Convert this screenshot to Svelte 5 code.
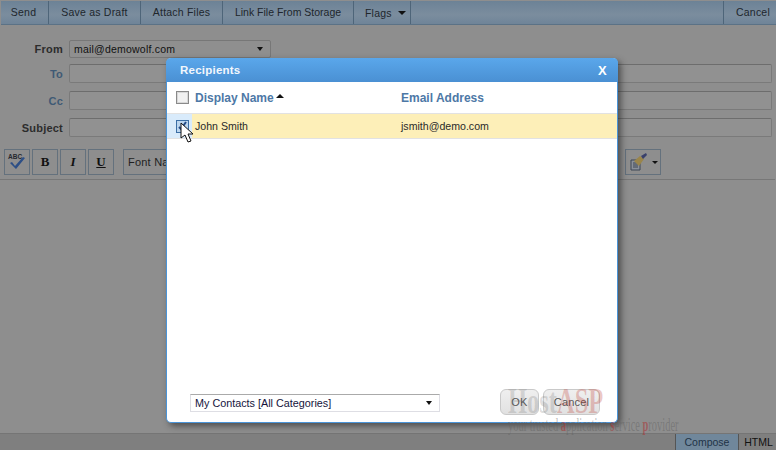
<script>
  const tabs = ['Send', 'Save as Draft', 'Attach Files', 'Link File From Storage'];
  const fields = ['To', 'Cc', 'Subject'];
</script>

<div class="page">
  <nav class="toolbar">
    {#each tabs as t}<span class="tool">{t}</span>{/each}
    <span class="tool flags">Flags <i class="caret"></i></span>
    <span class="grow"></span>
    <span class="tool cancel">Cancel</span>
  </nav>

  <section class="form">
    <div class="row from-row">
      <span class="lab">From</span>
      <span class="from">mail@demowolf.com<i class="caret small"></i></span>
    </div>
    {#each fields as f}
      <div class="row">
        <span class="lab" class:blue={f !== 'Subject'}>{f}</span>
        <span class="input"></span>
      </div>
    {/each}
  </section>

  <div class="editbar">
    <span class="btn">
      <svg width="20" height="20" viewBox="0 0 20 20">
        <text x="1" y="7" font-size="6.5" font-weight="700" font-family="Liberation Sans" fill="#26282e">ABC</text>
        <path d="M3 11l2-1 3 4 8-9 2 1-9 11z" fill="#2d4f86"/>
      </svg>
    </span>
    <span class="btn serif"><b>B</b></span>
    <span class="btn serif"><b><em>I</em></b></span>
    <span class="btn serif"><b><u>U</u></b></span>
    <span class="font">Font Name</span>
    <span class="grow"></span>
    <span class="btn paint">
      <svg width="20" height="20" viewBox="0 0 20 20">
        <path d="M2 8h9v10H2z" fill="#8a9099" stroke="#3d4654"/>
        <path d="M4 11h5M4 13h5M4 15h5" stroke="#3d4654"/>
        <path d="M5 9l6-5 4 3-5 7z" fill="#9a854a"/>
        <path d="M12 4l5-3 1 2-4 4z" fill="#39406b"/>
      </svg>
      <i class="caret tiny"></i>
    </span>
  </div>

  <main class="editor"></main>

  <footer class="status">
    <span class="mode active">Compose</span>
    <span class="mode html">HTML</span>
  </footer>

  <div class="mark" aria-hidden="true">
    <div class="mark-top">Host<span>ASP</span></div>
    <div class="mark-sub">your trusted <span>a</span>pplication <span>s</span>ervice <span>p</span>rovider</div>
  </div>

  <div class="dialog">
    <header class="dlg-head"><span>Recipients</span><span class="x">X</span></header>
    <div class="thead">
      <span class="cell-check"><i class="check"></i></span>
      <span class="name-col">Display Name<i class="up"></i></span>
      <span>Email Address</span>
    </div>
    <div class="tr">
      <span class="cell-check sel"><i class="check on">
        <svg width="11" height="11" viewBox="0 0 11 11"><path d="M2 6l2 2 5-7" fill="none" stroke="#234a86" stroke-width="2"/></svg>
      </i></span>
      <span class="name-col">John Smith</span>
      <span>jsmith@demo.com</span>
    </div>
    <div class="spacer"></div>
    <div class="dlg-foot">
      <span class="select">My Contacts [All Categories]<i class="caret small"></i></span>
      <span class="grow"></span>
      <span class="pill ok">OK</span>
      <span class="pill">Cancel</span>
    </div>
  </div>

  <svg class="cursor" width="14" height="21" viewBox="0 0 14 21">
    <path d="M1 1v15l4-3 3 7 3-1-3-7h5z" fill="#fff" stroke="#111" stroke-width="1"/>
  </svg>
</div>

<style>
  :global(body) { margin: 0; }
  .page {
    position: relative;
    width: 776px;
    height: 450px;
    overflow: hidden;
    display: flex;
    flex-direction: column;
    background: #8e8e8e;
    font-family: "Liberation Sans", Arial, sans-serif;
    font-size: 11px;
    color: #1f1f1f;
  }
  .grow { flex: 1; }
  .toolbar {
    height: 23px;
    margin: 1px 0 0 1px;
    display: flex;
    align-items: center;
    background: linear-gradient(#6c8296, #7b8d9e 60%, #6f8498);
    border-bottom: 1px solid #5b7286;
    flex: none;
  }
  .tool {
    box-sizing: border-box;
    height: 23px;
    line-height: 22px;
    text-align: center;
    border-right: 1px solid #4e6579;
    font-size: 10.5px;
    letter-spacing: 0.02em;
    color: #20262c;
    white-space: nowrap;
  }
  .tool:nth-child(1) { width: 48px; padding-right: 2px; }
  .tool:nth-child(2) { width: 92px; }
  .tool:nth-child(3) { width: 82px; }
  .tool:nth-child(4) { width: 131px; letter-spacing: 0; }
  .tool.flags { width: 57px; padding-left: 11px; display: flex; align-items: center; gap: 6px; }
  .tool.cancel { width: 53px; border-right: 0; border-left: 1px solid #4e6579; padding-left: 6px; }
  .caret {
    display: inline-block;
    width: 0; height: 0;
    border: 4px solid transparent;
    border-top: 4px solid #111;
    border-bottom: 0;
  }
  .form { flex: none; padding-top: 15px; }
  .row {
    height: 27px;
    display: flex;
    align-items: center;
    padding-right: 4px;
  }
  .from-row { height: 18px; margin-bottom: 2px; }
  .lab {
    width: 63px;
    margin-right: 6px;
    text-align: right;
    font-weight: 700;
    font-size: 11px;
    color: #2c2c2c;
    letter-spacing: 0.02em;
  }
  .lab.blue { color: #3f5a75; }
  .from {
    width: 189px;
    height: 16px;
    line-height: 16px;
    padding-left: 4px;
    border: 1px solid #777;
    border-radius: 2px;
    background: #8f8f8f;
    color: #111;
    font-size: 10.5px;
    letter-spacing: 0.02em;
    display: flex;
    justify-content: space-between;
    align-items: center;
    padding-right: 7px;
    box-sizing: content-box;
  }
  .input {
    flex: 1;
    height: 17px;
    border: 1px solid #7a7a7a;
    border-top-color: #6d6d6d;
    background: #919191;
    border-radius: 2px;
  }
  .editbar {
    flex: none;
    height: 26px;
    margin-top: 8px;
    padding: 0 115px 0 4px;
    display: flex;
    align-items: center;
    gap: 2px;
  }
  .btn {
    width: 24px;
    height: 24px;
    border: 1px solid #64717d;
    display: flex;
    align-items: center;
    justify-content: center;
    box-sizing: content-box;
  }
  .serif { font-family: "Liberation Serif", serif; font-size: 13px; color: #111; }
  .font {
    margin-left: 7px;
    height: 24px;
    width: 60px;
    line-height: 25px;
    padding-left: 4px;
    border: 1px solid #64717d;
    font-size: 11px;
    letter-spacing: 0.02em;
  }
  .paint { width: 34px; gap: 3px; }
  .caret.small { border-width: 4px 3.5px 0; }
  .caret.tiny { border-width: 3px 3px 0; }
  .editor {
    flex: 1;
    margin: 4px 1px 0 0;
    border-top: 1px solid #777;
  }
  .status {
    flex: none;
    height: 16px;
    display: flex;
    justify-content: flex-end;
    background: #7f7f7f;
    border-top: 1px solid #757575;
  }
  .mode { font-size: 10.5px; border-left: 1px solid #555; color: #111; line-height: 16px; box-sizing: border-box; text-align: center; }
  .mode.active { width: 63px; background: #70879b; color: #1f3347; }
  .mode.html { width: 38px; padding-left: 2px; }

  .mark {
    position: absolute;
    left: 508px;
    top: 385px;
    width: 180px;
    font-family: "Liberation Serif", serif;
    pointer-events: none;
    z-index: 3;
    white-space: nowrap;
  }
  .mark-top {
    font-size: 36px;
    font-weight: 700;
    line-height: 33px;
    color: rgba(110, 110, 110, 0.24);
    transform: scaleX(0.68);
    transform-origin: left;
  }
  .mark-top span { color: rgba(190, 60, 50, 0.28); }
  .mark-sub {
    font-size: 18px;
    line-height: 15px;
    transform: scaleX(0.58);
    transform-origin: left;
    color: rgba(95, 95, 95, 0.45);
  }
  .mark-sub span { color: rgba(170, 50, 50, 0.55); font-weight: 700; }

  .dialog {
    position: absolute;
    left: 166px;
    top: 58px;
    width: 450px;
    height: 364px;
    display: flex;
    flex-direction: column;
    background: #fff;
    border: 1px solid #4a94d8;
    border-top: 0;
    border-radius: 5px;
    box-shadow: 3px 3px 6px rgba(35, 35, 35, 0.6);
    z-index: 2;
  }
  .dlg-head {
    height: 24px;
    margin: 0 -1px;
    padding: 0 11px 0 14px;
    display: flex;
    justify-content: space-between;
    align-items: center;
    background: linear-gradient(#5aa7eb, #4a90d3);
    border-radius: 5px 5px 0 0;
    color: #f2f7fc;
    font-weight: 700;
    font-size: 11.5px;
    letter-spacing: 0.02em;
  }
  .x { font-size: 13px; color: #fff; }
  .thead, .tr { display: flex; align-items: center; }
  .thead {
    height: 31px;
    color: #4d78a6;
    font-weight: 700;
    font-size: 12px;
  }
  .tr {
    height: 24px;
    background: #fdefb8;
    border-top: 1px solid #e2e2e2;
    border-bottom: 1px solid #e2e2e2;
    font-size: 10.6px;
    color: #2a2a2a;
  }
  .cell-check {
    box-sizing: border-box;
    width: 25px;
    height: 100%;
    padding-left: 5px;
    display: flex;
    align-items: center;
    justify-content: center;
    flex: none;
  }
  .cell-check.sel { background: #d9ebfb; }
  .name-col { width: 206px; display: flex; align-items: center; padding-left: 3px; }
  .check {
    width: 11px; height: 11px;
    border: 1px solid #8a8a8a;
    box-shadow: inset 0 0 0 1px #d8d8d8;
    background: #f1f1f1;
    display: flex;
    flex: none;
  }
  .check.on { border-color: #3b6ea5; background: #bcd6ef; box-shadow: none; }
  .up {
    width: 0; height: 0; margin-left: 2px; margin-bottom: 3px;
    border: 4px solid transparent; border-top: 0; border-bottom: 4px solid #111;
  }
  .spacer { flex: 1; }
  .dlg-foot {
    height: 26px;
    display: flex;
    align-items: center;
    padding: 0 17px 7px 23px;
  }
  .select {
    box-sizing: border-box;
    width: 250px;
    height: 18px;
    padding: 0 7px 0 4px;
    margin-top: 2px;
    display: flex;
    align-items: center;
    justify-content: space-between;
    border: 1px solid #dedee4;
    border-top-color: #aaa;
    font-size: 10.8px;
    color: #14143c;
  }
  .pill {
    box-sizing: border-box;
    width: 57px;
    height: 26px;
    line-height: 24px;
    text-align: center;
    border: 1px solid #c9c9c9;
    border-radius: 6px;
    background: linear-gradient(#efefef, #e1e1e1);
    color: #555;
    font-size: 11px;
    letter-spacing: 0.02em;
  }
  .pill.ok { width: 39px; margin-right: 4px; }
  .cursor { position: absolute; left: 180px; top: 122px; z-index: 4; }
</style>
